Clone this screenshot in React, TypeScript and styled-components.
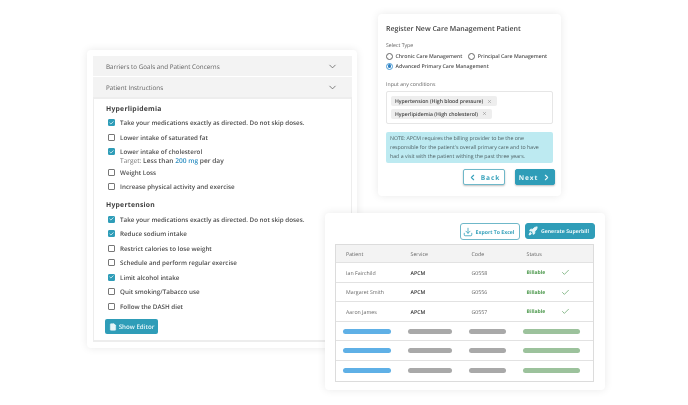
import React from "react";
import styled, { createGlobalStyle } from "styled-components";
import { ChevronDown, ChevronLeft, ChevronRight, Check, Download, Rocket, FileText, X } from "lucide-react";

const Global = createGlobalStyle`
  html, body { margin: 0; padding: 0; background: #fff; }
  body { font-family: "Open Sans", "Liberation Sans", sans-serif; color: #4a4a4a; text-rendering: geometricPrecision; }
  #root { width: 688px; height: 405px; }
`;

const Canvas = styled.div`
  position: relative;
  width: 688px;
  height: 405px;
  overflow: hidden;
  background: #fff;
  filter: blur(0.4px);
`;

const Card = styled.div<{ $x: number; $y: number; $w: number; $h: number }>`
  position: absolute;
  left: ${(p) => p.$x}px;
  top: ${(p) => p.$y}px;
  width: ${(p) => p.$w}px;
  height: ${(p) => p.$h}px;
  box-sizing: border-box;
  background: #fff;
  border-radius: 4px;
  box-shadow: 0 0 9px rgba(0, 0, 0, 0.09);
`;

/* Instructions card */
const InstructionsInner = styled.div`
  display: flex;
  flex-direction: column;
  padding: 6px 5px 6px 6px;
  height: 100%;
  box-sizing: border-box;
`;
const AccordionHead = styled.div`
  flex: none;
  height: 20px;
  margin-bottom: 1px;
  padding: 0 14px 0 13px;
  display: flex;
  align-items: center;
  justify-content: space-between;
  background: #f3f3f3;
  font-size: 6.3px;
  color: #5f5f5f;
  svg { color: #555; }
`;
const AccordionBody = styled.div`
  flex: 1;
  border: 1px solid #ededed;
  border-top-width: 2px;
  border-bottom-width: 2px;
  margin-top: -1px;
  padding: 4.5px 0 0 12px;
`;
const SectionTitle = styled.div<{ $gap?: number }>`
  font-size: 6.8px;
  font-weight: 700;
  letter-spacing: 0.25px;
  line-height: 10px;
  color: #3f3f3f;
  margin-top: ${(p) => p.$gap ?? 0}px;
  margin-bottom: 4.5px;
`;
const SecondTitle = styled(SectionTitle)`
  margin-bottom: 5px;
`;
const CheckRow = styled.div`
  display: flex;
  align-items: flex-start;
  height: 14.5px;
  padding-left: 2px;
  font-size: 6.25px;
  font-weight: 600;
  line-height: 10px;
  color: #4c4c4c;
`;
const CheckTall = styled(CheckRow)`
  height: 20.5px;
`;
const Box = styled.span<{ $on?: boolean }>`
  flex: none;
  width: 7px;
  height: 7px;
  box-sizing: border-box;
  margin: 1px 5px 0 0;
  border-radius: 1px;
  border: 1px solid ${(p) => (p.$on ? "#2f9db8" : "#777")};
  background: ${(p) => (p.$on ? "#2f9db8" : "#fff")};
  display: flex;
  align-items: center;
  justify-content: center;
  color: #fff;
`;
const TargetLine = styled.div`
  font-size: 6.6px;
  font-weight: 600;
  margin-top: -1px;
  b { font-weight: 400; color: #777; }
  em { font-style: normal; color: #2f8fc2; }
`;
const ShowEditor = styled.div`
  margin: 3px 0 0 -1px;
  width: 53px;
  height: 15px;
  border-radius: 2px;
  background: #2f9db8;
  color: #e8f6f9;
  font-size: 6.2px;
  font-weight: 600;
  display: flex;
  align-items: center;
  justify-content: center;
  gap: 2px;
`;

/* Register card */
const RegisterInner = styled.div`
  padding: 10px 8px 0 8px;
  display: flex;
  flex-direction: column;
`;
const RegTitle = styled.div`
  font-size: 7px;
  font-weight: 600;
  line-height: 11px;
  color: #444;
  margin-bottom: 6px;
`;
const Label = styled.div`
  font-size: 5.2px;
  line-height: 8px;
  color: #666;
`;
const RadioGroup = styled.div`
  display: flex;
  flex-wrap: wrap;
  column-gap: 6px;
  margin: 2px 0 9px;
`;
const RadioItem = styled.div`
  display: flex;
  align-items: center;
  gap: 2.5px;
  height: 10px;
  font-size: 5.2px;
  font-weight: 600;
  color: #4f4f4f;
`;
const Radio = styled.span<{ $on?: boolean }>`
  width: 7px;
  height: 7px;
  box-sizing: border-box;
  border-radius: 50%;
  border: 1px solid ${(p) => (p.$on ? "#4a9bd4" : "#666")};
  display: flex;
  align-items: center;
  justify-content: center;
  &::after {
    content: "";
    display: ${(p) => (p.$on ? "block" : "none")};
    width: 3.5px;
    height: 3.5px;
    border-radius: 50%;
    background: #2b7fc4;
  }
`;
const TagBox = styled.div`
  margin-top: 3px;
  height: 33px;
  width: 167px;
  box-sizing: border-box;
  border: 1px solid #e6e6e6;
  border-radius: 2px;
  padding: 4px 4px 0;
  display: flex;
  flex-direction: column;
  align-items: flex-start;
  gap: 2.5px;
`;
const Tag = styled.div`
  height: 10px;
  padding: 0 5px 0 4px;
  border-radius: 2px;
  background: #eeeeee;
  font-size: 5.15px;
  font-weight: 600;
  color: #444;
  display: flex;
  align-items: center;
  gap: 4px;
  svg { color: #777; }
`;
const Note = styled.div`
  margin-top: 8px;
  width: 167px;
  height: 31px;
  box-sizing: border-box;
  padding: 2px 4px;
  border-radius: 2px;
  background: #bdeaf1;
  font-size: 5.24px;
  line-height: 9px;
  color: #4d5f63;
`;
const FormActions = styled.div`
  display: flex;
  justify-content: flex-end;
  gap: 10px;
  margin: 6px -2px 0 0;
`;
const StepButton = styled.div<{ $solid?: boolean }>`
  width: ${(p) => (p.$solid ? 40 : 42)}px;
  height: 16px;
  box-sizing: border-box;
  border-radius: 2px;
  border: 1px solid ${(p) => (p.$solid ? "#2f9db8" : "#6fb8c9")};
  background: ${(p) => (p.$solid ? "#2f9db8" : "#fff")};
  color: ${(p) => (p.$solid ? "#e8f6f9" : "#3aa3bc")};
  box-shadow: 0 1px 2px rgba(0, 0, 0, 0.25);
  font-size: 6.6px;
  font-weight: 700;
  letter-spacing: 0.9px;
  display: flex;
  align-items: center;
  justify-content: center;
  gap: 4px;
`;

/* Billing card */
const BillingInner = styled.div`
  padding: 10px 10px 0;
  display: flex;
  flex-direction: column;
`;
const Toolbar = styled.div`
  display: flex;
  justify-content: flex-end;
  gap: 5px;
  height: 17px;
  margin-bottom: 4px;
`;
const ToolButton = styled.div<{ $solid?: boolean; $w: number }>`
  width: ${(p) => p.$w}px;
  height: ${(p) => (p.$solid ? 16 : 17)}px;
  box-sizing: border-box;
  padding-right: 3px;
  border-radius: 3px;
  border: 1px solid ${(p) => (p.$solid ? "#2f9db8" : "#6fb8c9")};
  background: ${(p) => (p.$solid ? "#2f9db8" : "#fff")};
  color: ${(p) => (p.$solid ? "#e8f6f9" : "#3aa3bc")};
  font-size: 5.15px;
  font-weight: 700;
  display: flex;
  align-items: center;
  justify-content: center;
  gap: 3px;
`;
const Table = styled.div`
  width: 259px;
  box-sizing: border-box;
  border: 1px solid #dcdcdc;
`;
const Row = styled.div<{ $head?: boolean }>`
  display: grid;
  grid-template-columns: 64.5px 61px 55px 34px 1fr;
  align-items: center;
  height: ${(p) => (p.$head ? 18 : 19.6)}px;
  padding: ${(p) => (p.$head ? 0 : 1)}px 0 0 10px;
  box-sizing: border-box;
  background: ${(p) => (p.$head ? "#f3f3f3" : "#fff")};
  border-bottom: 1px solid #e2e2e2;
  font-size: 5.25px;
  line-height: 8px;
  color: #666;
`;
const Strong = styled.span`
  color: #333;
  font-weight: 600;
`;
const Billable = styled.span`
  color: #4f9a4f;
  font-weight: 700;
  font-size: 5.05px;
  margin-top: 1px;
`;
const Ok = styled.span`
  display: flex;
  color: #3f8f45;
  svg { display: block; }
`;
const PillRow = styled.div`
  display: grid;
  grid-template-columns: 48px 44px 37px 57px;
  column-gap: 17px;
  align-items: center;
  height: 19.6px;
  padding-left: 7px;
  box-sizing: border-box;
  border-bottom: 1px solid #e2e2e2;
  &:last-child { border-bottom: 0; }
`;
const Pill = styled.span<{ $c: string }>`
  height: 5px;
  border-radius: 3px;
  background: ${(p) => p.$c};
`;

const Item = ({ on, children, tall }: { on?: boolean; children: React.ReactNode; tall?: boolean }) => {
  const R = tall ? CheckTall : CheckRow;
  return (
    <R>
      <Box $on={on}>{on && <Check size={6} strokeWidth={3.5} />}</Box>
      <div>{children}</div>
    </R>
  );
};

const patients = [
  ["Ian Fairchild", "G0558"],
  ["Margaret Smith", "G0556"],
  ["Aaron James", "G0557"],
];

export default function App() {
  return (
    <Canvas>
      <Global />
      <Card $x={87} $y={50} $w={270} $h={298}>
        <InstructionsInner>
          <AccordionHead>
            Barriers to Goals and Patient Concerns <ChevronDown size={11} strokeWidth={1.6} />
          </AccordionHead>
          <AccordionHead>
            Patient Instructions <ChevronDown size={11} strokeWidth={1.6} />
          </AccordionHead>
          <AccordionBody>
            <SectionTitle>Hyperlipidemia</SectionTitle>
            <Item on>Take your medications exactly as directed. Do not skip doses.</Item>
            <Item>Lower intake of saturated fat</Item>
            <Item on tall>
              Lower intake of cholesterol
              <TargetLine>
                <b>Target:</b> Less than <em>200 mg</em> per day
              </TargetLine>
            </Item>
            <Item>Weight Loss</Item>
            <Item>Increase physical activity and exercise</Item>
            <SecondTitle $gap={3}>Hypertension</SecondTitle>
            <Item on>Take your medications exactly as directed. Do not skip doses.</Item>
            <Item on>Reduce sodium intake</Item>
            <Item>Restrict calories to lose weight</Item>
            <Item>Schedule and perform regular exercise</Item>
            <Item on>Limit alcohol intake</Item>
            <Item>Quit smoking/Tabacco use</Item>
            <Item>Follow the DASH diet</Item>
            <ShowEditor>
              <FileText size={8} fill="#e8f6f9" strokeWidth={1.5} /> Show Editor
            </ShowEditor>
          </AccordionBody>
        </InstructionsInner>
      </Card>

      <Card $x={378} $y={14} $w={183} $h={182}>
        <RegisterInner>
          <RegTitle>Register New Care Management Patient</RegTitle>
          <Label>Select Type</Label>
          <RadioGroup>
            <RadioItem><Radio />Chronic Care Management</RadioItem>
            <RadioItem><Radio />Principal Care Management</RadioItem>
            <RadioItem><Radio $on />Advanced Primary Care Management</RadioItem>
          </RadioGroup>
          <Label>Input any conditions</Label>
          <TagBox>
            <Tag>Hypertension (High blood pressure) <X size={5} strokeWidth={2} /></Tag>
            <Tag>Hyperlipidemia (High cholesterol) <X size={5} strokeWidth={2} /></Tag>
          </TagBox>
          <Note>
            NOTE: APCM requires the billing provider to be the one responsible for the patient's overall primary care and to have had a visit with the patient withing the past three years.
          </Note>
          <FormActions>
            <StepButton><ChevronLeft size={9} strokeWidth={3} /> Back</StepButton>
            <StepButton $solid>Next <ChevronRight size={9} strokeWidth={3} /></StepButton>
          </FormActions>
        </RegisterInner>
      </Card>

      <Card $x={325} $y={213} $w={280} $h={177}>
        <BillingInner>
          <Toolbar>
            <ToolButton $w={60}><Download size={10} strokeWidth={2} /> Export To Excel</ToolButton>
            <ToolButton $w={70} $solid><Rocket size={10} strokeWidth={2} fill="#e8f6f9" /> Generate Superbill</ToolButton>
          </Toolbar>
          <Table>
            <Row $head>
              <span>Patient</span><span>Service</span><span>Code</span><span>Status</span><span />
            </Row>
            {patients.map(([name, code]) => (
              <Row key={code}>
                <span>{name}</span>
                <Strong>APCM</Strong>
                <span>{code}</span>
                <Billable>Billable</Billable>
                <Ok><Check size={9} strokeWidth={1.6} /></Ok>
              </Row>
            ))}
            {[0, 1, 2].map((i) => (
              <PillRow key={i}>
                <Pill $c="#5fb0e6" />
                <Pill $c="#a9a9a9" />
                <Pill $c="#a9a9a9" />
                <Pill $c="#9cc29c" />
              </PillRow>
            ))}
          </Table>
        </BillingInner>
      </Card>
    </Canvas>
  );
}
